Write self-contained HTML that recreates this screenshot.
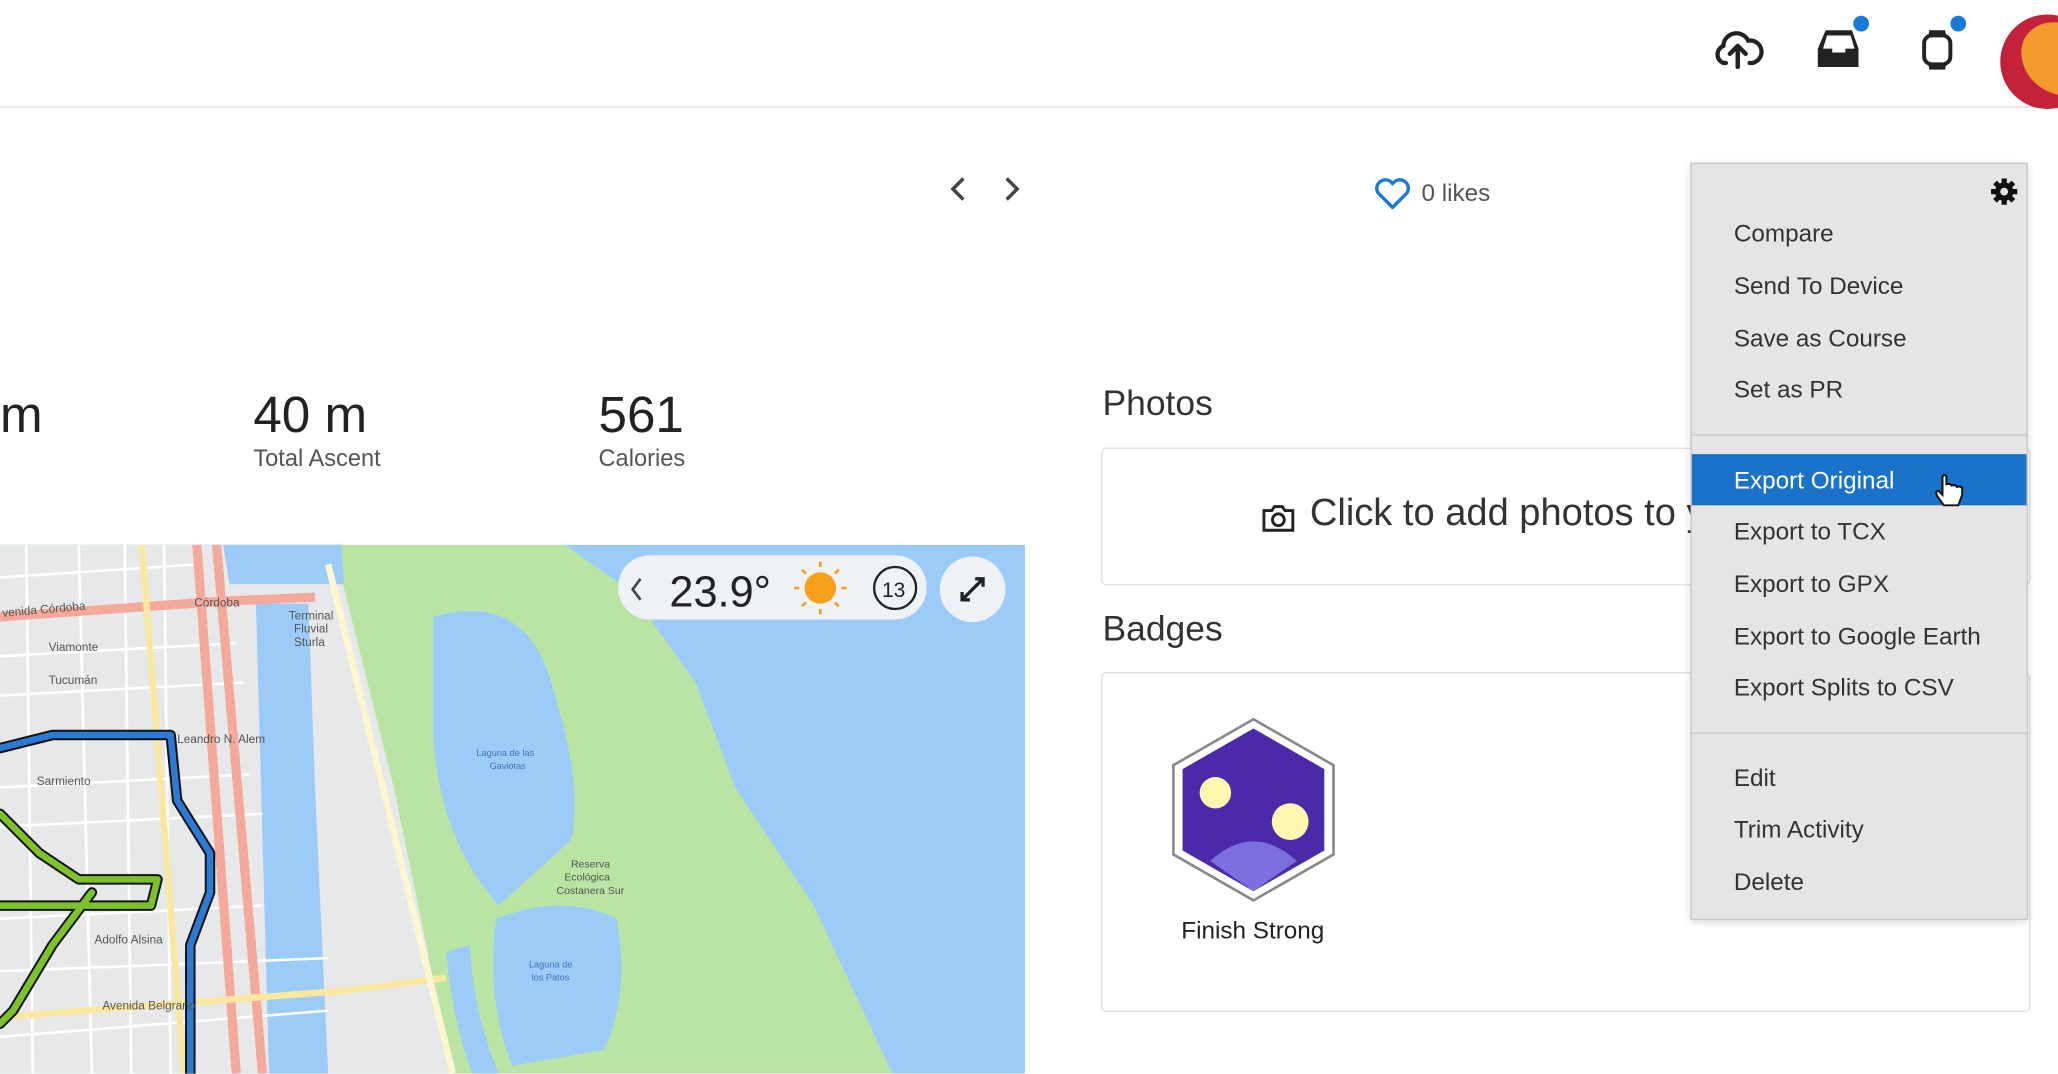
<!DOCTYPE html>
<html><head><meta charset="utf-8"><style>
html,body{margin:0;padding:0;width:2058px;height:1074px;overflow:hidden;background:#fff}
#w{position:absolute;left:0;top:0;width:1568px;height:818px;transform:scale(1.3125);transform-origin:0 0;font-family:"Liberation Sans",sans-serif;color:#333}
.a{position:absolute}
.big{font-size:39px;color:#222;line-height:1}
.lbl{font-size:18px;color:#555}
.mi{position:absolute;left:32px;font-size:18.5px;color:#333}
</style></head><body><div id="w">
<div class="a" style="left:0;top:81px;width:1568px;height:1px;background:#ddd"></div>
<!-- header icons -->
<svg class="a" style="left:1304px;top:20px" width="40" height="34" viewBox="0 0 40 34"><path d="M11 28 H9 A7 7 0 0 1 9 15 A10 10 0 0 1 28 11 A8 8 0 0 1 31 28 H29" fill="none" stroke="#222" stroke-width="3.2" stroke-linecap="round"/><path d="M20 31 V16 M14 21 L20 15 L26 21" fill="none" stroke="#222" stroke-width="3.4" stroke-linecap="round" stroke-linejoin="round"/></svg>
<svg class="a" style="left:1383px;top:20px" width="36" height="32" viewBox="0 0 36 32"><path d="M8 3 H28 L33 17 V31 H2 V17 Z" fill="#222"/><path d="M9 7 H27 L30 17 H23 V20 H13 V17 H6 Z" fill="#fff"/></svg>
<div class="a" style="left:1412px;top:12px;width:12px;height:12px;border-radius:50%;background:#1a7ad9"></div>
<svg class="a" style="left:1463px;top:22px" width="26" height="32" viewBox="0 0 26 32"><path d="M7 1 H19 L20 6 H6 Z M6 26 H20 L19 31 H7 Z" fill="#222"/><rect x="3" y="5" width="20" height="22" rx="6" fill="none" stroke="#222" stroke-width="3"/></svg>
<div class="a" style="left:1486px;top:12px;width:12px;height:12px;border-radius:50%;background:#1a7ad9"></div>
<div class="a" style="left:1524px;top:11px;width:72px;height:72px;border-radius:50%;background:#c4213a;overflow:hidden"><div style="position:absolute;left:16px;top:6px;width:60px;height:56px;background:#f29a2e;border-radius:40% 0 0 60%"></div></div>
<!-- nav arrows -->
<svg class="a" style="left:720px;top:133px" width="64" height="22"><path d="M14 3 L6 11 L14 19 M47 3 L55 11 L47 19" fill="none" stroke="#444" stroke-width="2.6"/></svg>
<svg class="a" style="left:1047px;top:135px" width="28" height="26" viewBox="0 0 28 26"><path d="M14 23 L3 12 A6 6 0 0 1 14 5 A6 6 0 0 1 25 12 Z" fill="none" stroke="#1a7ad9" stroke-width="2.6" stroke-linejoin="round"/></svg>
<div class="a" style="left:1083px;top:136px;font-size:18.5px;color:#555">0 likes</div>
<!-- stats -->
<div class="a big" style="left:0;top:297px">m</div>
<div class="a big" style="left:193px;top:297px">40 m</div>
<div class="a lbl" style="left:193px;top:339px">Total Ascent</div>
<div class="a big" style="left:456px;top:297px">561</div>
<div class="a lbl" style="left:456px;top:339px">Calories</div>
<!-- map -->
<svg class="a" style="left:0;top:415px" width="781" height="403" viewBox="0 415 781 403" preserveAspectRatio="none">
<rect x="0" y="415" width="781" height="403" fill="#9ccbf7"/>
<path d="M0 415 H430 L480 450 L530 520 L560 600 L620 690 L680 818 H0Z" fill="#b9e4a4"/>
<path d="M0 415 H250 L260 440 L300 600 L345 818 H0Z" fill="#e6e8ea"/>
<path d="M195 460 H235 L240 600 L250 818 H205 L200 640Z" fill="#9ccbf7"/>
<path d="M170 415 H260 L262 445 H175Z" fill="#9ccbf7"/>
<path d="M330 470 Q400 450 420 520 Q445 600 435 640 L380 690 Q335 640 330 560Z" fill="#9ccbf7"/>
<path d="M378 700 Q430 680 470 700 Q480 760 460 800 L390 812 Q370 760 378 700Z" fill="#9ccbf7"/>
<path d="M340 725 Q345 780 360 818 H380 Q360 770 358 720Z" fill="#9ccbf7"/>
<g stroke="#fff" stroke-width="2" fill="none">
<path d="M0 440 L150 430 M0 500 L180 490 M0 530 L185 520 M0 600 L190 590 M0 630 L200 620 M0 700 L200 690 M0 740 L250 730 M0 790 L250 770"/>
<path d="M20 415 L25 818 M60 415 L70 818 M95 415 L100 818 M125 415 L130 818"/>
</g>
<path d="M150 415 L180 818 M165 415 L200 818" stroke="#f4a99b" stroke-width="7" fill="none"/>
<path d="M0 470 L170 458 L240 455" stroke="#f4a99b" stroke-width="7" fill="none"/>
<path d="M108 415 L140 818 M0 775 L260 755 L340 745" stroke="#fae8a0" stroke-width="5" fill="none"/>
<path d="M250 430 L345 818" stroke="#fdf6d0" stroke-width="5" fill="none"/>
<g fill="none" stroke-linejoin="round" stroke-linecap="round">
<path d="M0 570 L40 560 L130 560 L135 610 L160 650 L160 680 L145 720 L145 818" stroke="#111" stroke-width="8"/>
<path d="M0 570 L40 560 L130 560 L135 610 L160 650 L160 680 L145 720 L145 818" stroke="#2b7bd6" stroke-width="5"/>
<path d="M0 620 L30 650 L60 670 L120 670 L115 690 L0 690 M70 680 L40 720 L10 770 L0 780" stroke="#111" stroke-width="8"/>
<path d="M0 620 L30 650 L60 670 L120 670 L115 690 L0 690 M70 680 L40 720 L10 770 L0 780" stroke="#7cc228" stroke-width="5"/>
</g>
<g font-family="Liberation Sans" font-size="9" fill="#555">
<text x="2" y="470" transform="rotate(-5 2 470)">venida Córdoba</text><text x="37" y="496">Viamonte</text><text x="37" y="521">Tucumán</text>
<text x="28" y="598">Sarmiento</text><text x="72" y="719">Adolfo Alsina</text><text x="78" y="769">Avenida Belgrano</text>
<text x="148" y="462">Córdoba</text><text x="135" y="566">Leandro N. Alem</text><text x="220" y="472">Terminal</text><text x="224" y="482">Fluvial</text><text x="224" y="492">Sturla</text>
<text x="363" y="576" font-size="7" fill="#3a74b8">Laguna de las</text><text x="373" y="586" font-size="7" fill="#3a74b8">Gaviotas</text>
<text x="435" y="661" font-size="8">Reserva</text><text x="430" y="671" font-size="8">Ecológica</text><text x="424" y="681" font-size="8">Costanera Sur</text>
<text x="403" y="737" font-size="7" fill="#3a74b8">Laguna de</text><text x="405" y="747" font-size="7" fill="#3a74b8">los Patos</text>
</g>
<rect x="471" y="423" width="235" height="49" rx="24" fill="#eef2f6"/>
<path d="M488 441 L482 449 L488 457" stroke="#444" stroke-width="2" fill="none"/>
<text x="510" y="462" font-family="Liberation Sans" font-size="33" fill="#222">23.9°</text>
<circle cx="625" cy="448" r="12" fill="#f8a01c"/>
<g stroke="#f8a01c" stroke-width="2"><path d="M625 428 V432 M625 464 V468 M605 448 H609 M641 448 H645 M611 434 L614 437 M636 459 L639 462 M611 462 L614 459 M636 437 L639 434"/></g>
<circle cx="682" cy="448" r="16" fill="none" stroke="#222" stroke-width="1.8"/>
<text x="672" y="455" font-family="Liberation Sans" font-size="16" fill="#222">13</text>
<circle cx="741" cy="449" r="25" fill="#eef2f6"/>
<path d="M733 457 L749 441 M743 441 H749 V447 M733 451 V457 H739" stroke="#222" stroke-width="2.5" fill="none"/>
</svg>
<!-- photos -->
<div class="a" style="left:840px;top:292px;font-size:27px;color:#333">Photos</div>
<div class="a" style="left:839px;top:341px;width:706px;height:103px;border:1px solid #ddd;border-radius:4px"></div>
<svg class="a" style="left:960px;top:383px" width="28" height="24" viewBox="0 0 28 24"><path d="M3 6 H9 L11 3 H17 L19 6 H25 V21 H3Z" fill="none" stroke="#222" stroke-width="2.2"/><circle cx="14" cy="13" r="4.5" fill="none" stroke="#222" stroke-width="2.2"/></svg>
<div class="a" style="left:998px;top:375px;font-size:29px;color:#333;white-space:nowrap">Click to add photos to y</div>
<div class="a" style="left:840px;top:464px;font-size:27px;color:#333">Badges</div>
<div class="a" style="left:839px;top:512px;width:706px;height:257px;border:1px solid #ddd;border-radius:4px"></div>
<svg class="a" style="left:892px;top:546px" width="126" height="142" viewBox="0 0 126 142"><polygon points="63,2 124,37 124,105 63,140 2,105 2,37" fill="#fff" stroke="#888" stroke-width="2"/><polygon points="63,9 117,40 117,102 63,133 9,102 9,40" fill="#4a2aa8"/><circle cx="34" cy="58" r="12" fill="#fff7b0"/><circle cx="91" cy="80" r="14" fill="#fff7b0"/><path d="M30 110 Q63 80 96 110 L63 133Z" fill="#7b6fe0"/></svg>
<div class="a" style="left:900px;top:698px;font-size:18.5px;color:#222">Finish Strong</div>
<!-- menu -->
<div class="a" style="left:1288px;top:124px;width:255px;height:575px;background:#e5e5e5;border:1px solid #c6c6c6;box-shadow:0 2px 6px rgba(0,0,0,.15)">
<svg class="a" style="left:227px;top:10px" width="22" height="22" viewBox="0 0 22 22"><g fill="#111"><circle cx="11" cy="11" r="7"/><g stroke="#111" stroke-width="4"><path d="M11 1 V21 M1 11 H21 M4 4 L18 18 M18 4 L4 18"/></g></g><circle cx="11" cy="11" r="3" fill="#e5e5e5"/></svg>
<div class="mi" style="top:42px">Compare</div>
<div class="mi" style="top:82px">Send To Device</div>
<div class="mi" style="top:122px">Save as Course</div>
<div class="mi" style="top:161px">Set as PR</div>
<div class="a" style="left:0;top:206px;width:255px;height:1px;background:#c6c6c6"></div>
<div class="a" style="left:0;top:221px;width:255px;height:39px;background:#1a73c8"></div>
<div class="mi" style="top:230px;color:#fff">Export Original</div>
<div class="mi" style="top:269px">Export to TCX</div>
<div class="mi" style="top:309px">Export to GPX</div>
<div class="mi" style="top:349px">Export to Google Earth</div>
<div class="mi" style="top:388px">Export Splits to CSV</div>
<div class="a" style="left:0;top:433px;width:255px;height:1px;background:#c6c6c6"></div>
<div class="mi" style="top:457px">Edit</div>
<div class="mi" style="top:496px">Trim Activity</div>
<div class="mi" style="top:536px">Delete</div>
<svg class="a" style="left:184px;top:236px" width="26" height="28" viewBox="0 0 26 28"><path d="M7 2 V16 L4 13 Q1 13 3 17 L8 24 H19 L22 16 V11 Q21 9 18 10 Q17 8 14 9 Q13 7 10 8 V2 Q8.5 0 7 2Z" fill="#fff" stroke="#111" stroke-width="1.5"/></svg>
</div>
</div></body></html>
